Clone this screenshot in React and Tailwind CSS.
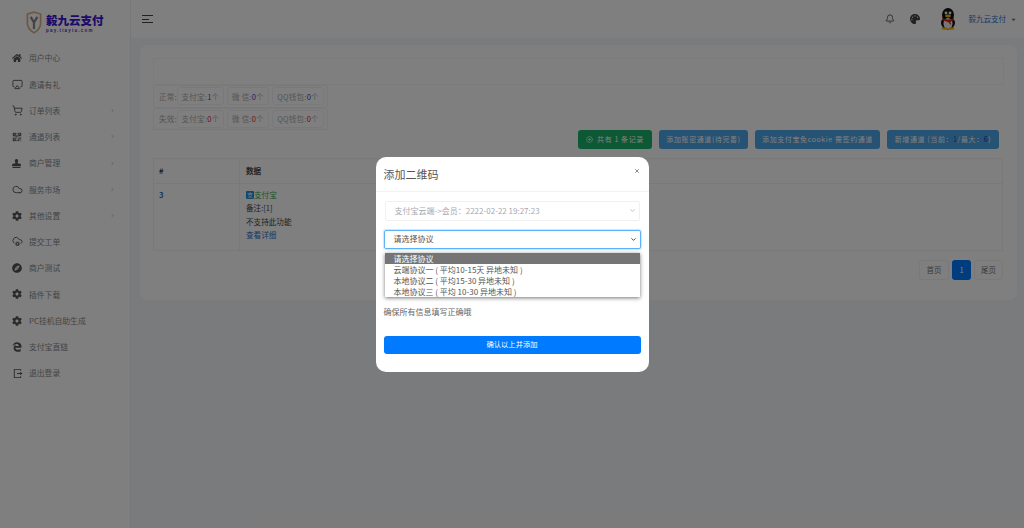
import React from "react";
import { FaHome, FaCog, FaCompass, FaEdgeLegacy, FaStamp, FaPalette, FaCaretDown } from "react-icons/fa";
import { RiLogoutBoxRLine } from "react-icons/ri";
import { Airplay, ShoppingCart, QrCode, Cloud, ChevronRight, ChevronDown, Bell, X, CirclePlus, CloudCog } from "lucide-react";

const menu = [
  ["用户中心", <FaHome size={10} />, false],
  ["邀请有礼", <Airplay size={11} strokeWidth={2} />, false],
  ["订单列表", <ShoppingCart size={11} strokeWidth={2} />, true],
  ["通道列表", <QrCode size={10} strokeWidth={2.6} />, true],
  ["商户管理", <FaStamp size={9} />, true],
  ["服务市场", <Cloud size={11} strokeWidth={2} />, true],
  ["其他设置", <FaCog size={10} />, true],
  ["提交工单", <CloudCog size={11} strokeWidth={2} />, false],
  ["商户测试", <FaCompass size={10} />, false],
  ["插件下载", <FaCog size={10} />, false],
  ["PC挂机自助生成", <FaCog size={10} />, false],
  ["支付宝直链", <FaEdgeLegacy size={10} />, false],
  ["退出登录", <RiLogoutBoxRLine size={11} />, false],
];

function Logo() {
  return (
    <div className="flex items-center gap-[4px] h-[38px] pl-[26px] pt-[6px]">
      <svg width="16" height="23" viewBox="0 0 17 24" fill="none">
        <path d="M1.5 3 L8.5 1 L15.5 3 V13 C15.5 18 11 21.5 8.5 23 C6 21.5 1.5 18 1.5 13 Z" stroke="#d8b080" strokeWidth="1.8" />
        <path d="M5 6 L8.5 12 L12 6 M8.5 12 V19" stroke="#888" strokeWidth="2.4" />
      </svg>
      <div className="flex flex-col items-start pt-[1px]">
        <span className="text-[11.5px] leading-[14px] font-black text-[#3e14d8] whitespace-nowrap font-['Noto_Sans_CJK_SC',sans-serif]">毅九云支付</span>
        <span className="text-[4.5px] leading-[5px] tracking-[1.2px] font-bold text-[#4a3ac0] mt-[1px] font-['Liberation_Sans',sans-serif]">pay.tiayiu.com</span>
      </div>
    </div>
  );
}

function Penguin() {
  return (
    <svg width="18" height="22" viewBox="0 0 18 22">
      <ellipse cx="9" cy="7" rx="6" ry="7" fill="#111" />
      <ellipse cx="9" cy="15" rx="7" ry="6.5" fill="#111" />
      <ellipse cx="9" cy="15.5" rx="4.5" ry="5.5" fill="#eee" />
      <circle cx="7" cy="5" r="1.4" fill="#eee" />
      <circle cx="11" cy="5" r="1.4" fill="#eee" />
      <ellipse cx="9" cy="8" rx="3" ry="1.4" fill="#f5b400" />
      <path d="M3 10 Q9 13 15 10 L15 12 Q9 15 12 15 L12 17 L9 14 Q5 13 3 12 Z" fill="#e02020" />
      <ellipse cx="5.5" cy="20.5" rx="3" ry="1.3" fill="#f5b400" />
      <ellipse cx="12.5" cy="20.5" rx="3" ry="1.3" fill="#f5b400" />
    </svg>
  );
}

function Pill({ w, children }) {
  return <span className={`${w} h-[18px] flex items-center justify-center whitespace-nowrap border border-[#f3f3f3] rounded-[3px]`}>{children}</span>;
}

function StatRow({ label, color, first }) {
  const N = ({ v }) => <span className={color}>{v}</span>;
  return (
    <div className="h-[22.5px] flex items-center gap-[3px] pl-[5px] border border-[#f3f3f3] rounded-[3px] w-[175px] text-[7.5px] tracking-[0.25px] text-[#aaa]">
      <span className="w-[15px] whitespace-nowrap">{label}</span>
      <Pill w="w-[47px]">支付宝:<N v={first} />个</Pill>
      <Pill w="w-[42px]">微 信:<N v={0} />个</Pill>
      <Pill w="w-[52px]">QQ钱包:<N v={0} />个</Pill>
    </div>
  );
}

function Btn({ w, children, cls }) {
  return (
    <div className={`h-[19px] ${w} ${cls} rounded-[3px] flex items-center justify-center text-white text-[7px] tracking-[0.6px] whitespace-nowrap`}>
      {children}
    </div>
  );
}

export default function App() {
  return (
    <div className="relative w-[1024px] h-[528px] overflow-hidden flex bg-[#f5f6f8] font-['Noto_Sans_CJK_SC','Liberation_Sans',sans-serif]">
      <aside className="w-[131px] shrink-0 bg-white border-r border-[#eeeeee] flex flex-col">
        <Logo />
        <nav className="mt-[7px] flex flex-col">
          {menu.map(([t, icon, arrow]) => (
            <div key={t} className="h-[26.25px] flex items-center pl-[12px] pr-[15px] text-[#888] text-[7.8px]">
              <span className="w-[17px] flex items-center text-[#555]">{icon}</span>
              <span className="flex-1">{t}</span>
              {arrow && <ChevronRight size={5} strokeWidth={3} className="text-[#aaa]" />}
            </div>
          ))}
        </nav>
      </aside>

      <main className="flex-1 flex flex-col min-w-0">
        <header className="h-[38px] shrink-0 bg-white flex items-center pl-[11px] pr-[7px]">
          <div className="flex flex-col gap-[2.5px] w-[11px]">
            <span className="h-[1px] w-[11px] bg-[#444]" />
            <span className="h-[1px] w-[7px] bg-[#444]" />
            <span className="h-[1px] w-[11px] bg-[#444]" />
          </div>
          <div className="ml-auto flex items-center">
            <Bell size={10} strokeWidth={2} className="text-[#444]" />
            <FaPalette size={10} className="ml-[15px] text-[#444]" />
            <span className="ml-[19px] flex"><Penguin /></span>
            <span className="ml-[12px] text-[7.5px] text-[#2e72c8] whitespace-nowrap">毅九云支付</span>
            <FaCaretDown size={7} className="ml-[4px] text-[#2e72c8]" />
          </div>
        </header>

        <div className="flex-1 pl-[9px] pr-[7px] pt-[7px]">
          <section className="h-[255px] bg-white rounded-[8px] px-[13px] pt-[13px]">
            <div className="border border-[#f7f7f7] h-[27px]" />
            <StatRow label="正常:" color="text-[#3b3be0]" first={1} />
            <StatRow label="失效:" color="text-[#e02020]" first={0} />
            <div className="flex justify-end gap-[7px] pr-[5px]">
              <Btn w="w-[74px]" cls="bg-[#1cb36a]"><CirclePlus size={7} className="mr-[4px]" />共有 1 条记录</Btn>
              <Btn w="w-[89px]" cls="bg-[#4ca4e6]">添加账密通道(待完善)</Btn>
              <Btn w="w-[125px]" cls="bg-[#4ca4e6]">添加支付宝免cookie 需签约通道</Btn>
              <Btn w="w-[112px]" cls="bg-[#4ca4e6]">
                <span>新增通道 (当前：<span className="text-[#1a4fc0]">1</span>/最大：<span className="text-[#1a2fc0]">6</span>)</span>
              </Btn>
            </div>
            <div className="mt-[9px] mr-[1px] border border-[#f3f3f3] text-[7.6px] text-[#444]">
              <div className="h-[25px] flex border-b border-[#f3f3f3] font-bold">
                <div className="w-[86px] pl-[5px] flex items-center border-r border-[#f3f3f3]">#</div>
                <div className="pl-[6px] flex items-center">数据</div>
              </div>
              <div className="h-[66px] flex">
                <div className="w-[86px] pl-[5px] pt-[5px] border-r border-[#f3f3f3] font-bold text-[#2e72c8]">3</div>
                <div className="pl-[6px] pt-[4px] leading-[13.3px]">
                  <div className="flex items-center">
                    <span className="w-[8px] h-[8px] bg-[#1890d8] rounded-[1px] text-white text-[6px] leading-[8px] text-center">支</span>
                    <span className="text-[#2fa84f]">支付宝</span>
                  </div>
                  <div>备注:[1]</div>
                  <div>不支持此功能</div>
                  <div className="text-[#2e72c8]">查看详细</div>
                </div>
              </div>
            </div>
            <div className="flex justify-end gap-[3px] mt-[9px] mr-[1px] text-[7.5px] text-[#777]">
              <div className="w-[30px] h-[20px] border border-[#f3f3f3] rounded-[3px] flex items-center justify-center">首页</div>
              <div className="w-[19px] h-[20px] bg-[#007bff] text-white rounded-[3px] flex items-center justify-center">1</div>
              <div className="w-[29px] h-[20px] border border-[#f3f3f3] rounded-[3px] flex items-center justify-center">尾页</div>
            </div>
          </section>
        </div>
      </main>

      {/* modal overlay */}
      <div className="absolute inset-0 bg-black/50 flex items-center justify-center">
        <div className="w-[273px] h-[215px] bg-white rounded-[10px] flex flex-col relative">
          <div className="h-[35px] shrink-0 border-b border-[#f2f2f2] flex items-center pl-[8px] pt-[2px] text-[11px] text-[#555]">
            添加二维码
            <X size={6} strokeWidth={3} className="absolute right-[9px] top-[11px] text-[#666]" />
          </div>
          <div className="px-[8px] pt-[9px] flex flex-col">
            <div className="mx-[1px] h-[20px] border border-[#f0f0f0] rounded-[2px] flex items-center pl-[9px] pr-[3px] text-[8px] text-[#a8a8b0]">
              <span className="flex-1">支付宝云端-&gt;会员：2222-02-22 19:27:23</span>
              <ChevronDown size={7} strokeWidth={2.5} />
            </div>
            <div className="mt-[9px] h-[19px] border border-[#5cb3fd] rounded-[2px] flex items-center pl-[9px] pr-[3px] text-[8px] text-[#555] shadow-[0_0_1px_1px_rgba(0,123,255,0.2)]">
              <span className="flex-1">请选择协议</span>
              <ChevronDown size={7} strokeWidth={3} className="text-[#333]" />
            </div>
            <div className="mt-[4px] mx-[1px] h-[44px] bg-white shadow-[0_1px_4px_rgba(0,0,0,0.55)] flex flex-col text-[8px] leading-[11px] text-[#555] z-10">
              <div className="h-[11px] bg-[#757575] text-white pl-[9px]">请选择协议</div>
              <div className="h-[11px] pl-[9px]">云端协议一 ( 平均10-15天 异地未知 )</div>
              <div className="h-[11px] pl-[9px]">本地协议二 ( 平均15-30 异地未知 )</div>
              <div className="h-[11px] pl-[9px]">本地协议三 ( 平均 10-30 异地未知 )</div>
            </div>
            <div className="mt-[9px] text-[8px] leading-[11px] text-[#666]">确保所有信息填写正确哦</div>
            <div className="mt-[19px] h-[18px] bg-[#007bff] rounded-[3px] text-white text-[7.3px] flex items-center justify-center">确认以上并添加</div>
          </div>
        </div>
      </div>
    </div>
  );
}
